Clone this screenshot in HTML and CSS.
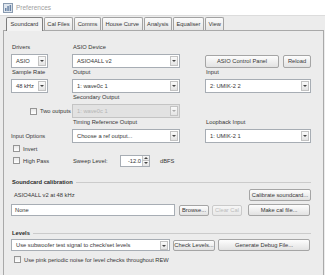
FILE: index.html
```html
<!DOCTYPE html>
<html lang="en">
<head>
    <meta charset="UTF-8">
    <title>Preferences</title>
    <link rel="stylesheet" href="styles.css">
</head>
<body>
<div class="window">
    <div class="titlebar">
        <svg class="app-icon" width="10" height="10" viewBox="0 0 10 10">
            <rect x="0.5" y="0.5" width="9" height="9" fill="#dfe6ee" stroke="#8a9bb0"/>
            <rect x="2" y="5" width="1.5" height="3" fill="#6a84a6"/>
            <rect x="4.3" y="3" width="1.5" height="5" fill="#6a84a6"/>
            <rect x="6.6" y="2" width="1.5" height="6" fill="#6a84a6"/>
        </svg>
        <span class="title">Preferences</span>
    </div>

    <div class="tabs">
        <div class="tab active">Soundcard</div>
        <div class="tab">Cal Files</div>
        <div class="tab">Comms</div>
        <div class="tab">House Curve</div>
        <div class="tab">Analysis</div>
        <div class="tab">Equaliser</div>
        <div class="tab">View</div>
    </div>

    <div class="panel">
        <div class="device-grid">
            <!-- row 1 -->
            <div class="field col-a">
                <div class="label">Drivers</div>
                <div class="combo small"><span class="value">ASIO</span><span class="arrow"></span></div>
            </div>
            <div class="field col-b">
                <div class="label">ASIO Device</div>
                <div class="combo"><span class="value">ASIO4ALL v2</span><span class="arrow"></span></div>
            </div>
            <div class="field col-c">
                <div class="label"></div>
                <div class="button-row">
                    <button class="btn asio-panel">ASIO Control Panel</button>
                    <button class="btn reload">Reload</button>
                </div>
            </div>

            <!-- row 2 -->
            <div class="field col-a">
                <div class="label">Sample Rate</div>
                <div class="combo small"><span class="value">48 kHz</span><span class="arrow"></span></div>
            </div>
            <div class="field col-b">
                <div class="label">Output</div>
                <div class="combo"><span class="value">1: wave0c 1</span><span class="arrow"></span></div>
            </div>
            <div class="field col-c">
                <div class="label">Input</div>
                <div class="combo"><span class="value">2: UMIK-2 2</span><span class="arrow"></span></div>
            </div>

            <!-- row 3 -->
            <div class="field col-ab">
                <div class="label"></div>
                <div class="check right">
                    <span class="box"></span><span>Two outputs</span>
                </div>
            </div>
            <div class="field col-b">
                <div class="label">Secondary Output</div>
                <div class="combo disabled"><span class="value">1: wave0c 1</span><span class="arrow"></span></div>
            </div>

            <!-- row 4 -->
            <div class="field col-a">
                <div class="label"></div>
                <div class="plain">Input Options</div>
            </div>
            <div class="field col-b">
                <div class="label">Timing Reference Output</div>
                <div class="combo"><span class="value">Choose a ref output...</span><span class="arrow"></span></div>
            </div>
            <div class="field col-c">
                <div class="label">Loopback Input</div>
                <div class="combo"><span class="value">1: UMIK-2 1</span><span class="arrow"></span></div>
            </div>

            <!-- row 5 -->
            <div class="check invert col-ab">
                <span class="box"></span><span>Invert</span>
            </div>

            <!-- row 6 -->
            <div class="check sweep-row col-ab">
                <span class="box"></span><span>High Pass</span>
            </div>
            <div class="sweep col-bc">
                <span class="sweep-label">Sweep Level:</span>
                <div class="spinner">
                    <span class="value">-12.0</span>
                    <span class="spin-btns"><span class="up"></span><span class="down"></span></span>
                </div>
                <span class="unit">dBFS</span>
            </div>
        </div>

        <div class="section-title calib-title">Soundcard calibration</div>
        <div class="line-row calib-info">
            <span class="info-text">ASIO4ALL v2 at 48 kHz</span>
            <button class="btn wide">Calibrate soundcard...</button>
        </div>
        <div class="line-row calib-file">
            <div class="text-field">None</div>
            <button class="btn browse">Browse...</button>
            <button class="btn clear" disabled>Clear Cal</button>
            <button class="btn wide">Make cal file...</button>
        </div>

        <div class="section-title levels-title">Levels</div>
        <div class="line-row levels-row">
            <div class="combo levels-combo"><span class="value">Use subwoofer test signal to check/set levels</span><span class="arrow"></span></div>
            <button class="btn check-levels">Check Levels...</button>
            <button class="btn debug">Generate Debug File...</button>
        </div>
        <div class="check pink">
            <span class="box"></span><span>Use pink periodic noise for level checks throughout REW</span>
        </div>
    </div>
</div>
</body>
</html>
```

FILE: styles.css
```css
body {
    margin: 0;
    background: #ececec;
    font-family: "Liberation Sans", Arial, sans-serif;
    font-size: 5.75px;
    color: #363636;
}
.window {
    width: 325px;
    height: 275px;
    overflow: hidden;
    background: #ececec;
}
/* Title bar */
.titlebar {
    height: 15px;
    background: #fff;
    border-bottom: 1px solid #dcdcdc;
    display: flex;
    align-items: center;
    padding-left: 3px;
}
.app-icon {
    margin-right: 3px;
}
.title {
    color: #a0a0a0;
    font-size: 6.5px;
}
/* Tabs */
.tabs {
    display: flex;
    margin-top: 1px;
    padding-left: 6px;
    height: 13px;
    position: relative;
    z-index: 1;
}
.tab {
    height: 13px;
    line-height: 12px;
    padding: 0 2.5px;
    margin-right: 1px;
    border: 1px solid #a2a2a2;
    border-bottom: none;
    border-radius: 2px 2px 0 0;
    background: linear-gradient(#fbfbfb, #e6e6e6);
    box-sizing: border-box;
}
.tab.active {
    border-color: #7d7d7d;
    background: #f3f3f3;
    height: 14px;
    padding: 0 3.5px;
}
/* Panel */
.panel {
    margin-left: 3px;
    width: 321px;
    height: 245px;
    box-sizing: border-box;
    border: 1px solid #a9a9a9;
    border-bottom: none;
    padding: 12px 12px 0 7px;
}
.device-grid {
    display: grid;
    grid-template-columns: 44px 17px 108px 25px 106px;
}
.col-a { grid-column: 1; }
.col-ab { grid-column: 1 / 3; }
.col-b { grid-column: 3; }
.col-c { grid-column: 5; }
.col-bc { grid-column: 3 / 6; }
.field {
    display: flex;
    flex-direction: column;
}
.label {
    height: 9px;
    line-height: 9px;
    margin-bottom: 2px;
    padding-left: 1px;
}
.plain {
    height: 14px;
    line-height: 14px;
}
/* Combo box */
.combo {
    height: 14px;
    box-sizing: border-box;
    border: 1px solid #a7adb4;
    background: #fff;
    display: flex;
    align-items: center;
}
.combo.small {
    width: 37px;
}
.combo .value {
    flex: 1;
    padding-left: 4px;
    white-space: nowrap;
    overflow: hidden;
}
.combo .arrow {
    width: 6px;
    height: 8px;
    margin-right: 1px;
    border: 1px solid #c3c3c3;
    background: linear-gradient(#fafafa, #e4e4e4);
    position: relative;
}
.combo .arrow::after {
    content: "";
    position: absolute;
    left: 1px;
    top: 3px;
    border-left: 2px solid transparent;
    border-right: 2px solid transparent;
    border-top: 2px solid #444;
}
.combo.disabled {
    background: #e2e2e2;
    border-color: #c4c4c4;
    color: #b5b5b5;
}
.combo.disabled .arrow::after {
    border-top-color: #aaa;
}
/* Buttons */
.btn {
    font-family: inherit;
    font-size: inherit;
    color: #363636;
    height: 13px;
    padding: 0;
    border: 1px solid #a5a5a5;
    border-radius: 2px;
    background: linear-gradient(#fdfdfd, #e2e2e2);
    box-sizing: border-box;
}
.btn:disabled {
    color: #bcbcbc;
    border-color: #cacaca;
    background: linear-gradient(#f6f6f6, #e8e8e8);
}
.button-row {
    display: flex;
    height: 14px;
    align-items: center;
}
.asio-panel {
    width: 74px;
}
.reload {
    width: 28px;
    margin-left: 4px;
}
/* Checkboxes */
.check {
    display: flex;
    align-items: center;
    height: 14px;
}
.check.right {
    justify-content: flex-end;
    padding-right: 1px;
}
.check .box {
    width: 7px;
    height: 7px;
    box-sizing: border-box;
    border: 1px solid #959595;
    background: linear-gradient(#e8e8e8, #fff);
    margin-right: 3px;
}
.check.invert {
    height: 11px;
    padding-left: 2px;
}
.check.sweep-row {
    height: 13px;
    padding-left: 2px;
}
/* Sweep level */
.sweep {
    display: flex;
    align-items: center;
    height: 13px;
    padding-left: 1px;
}
.sweep-label {
    width: 47px;
}
.spinner {
    width: 30px;
    height: 12px;
    box-sizing: border-box;
    border: 1px solid #a7adb4;
    background: #fff;
    display: flex;
}
.spinner .value {
    flex: 1;
    text-align: right;
    line-height: 10px;
    padding-right: 1px;
}
.spin-btns {
    width: 6px;
    display: flex;
    flex-direction: column;
    border-left: 1px solid #c3c3c3;
}
.spin-btns span {
    flex: 1;
    background: linear-gradient(#fafafa, #e4e4e4);
    position: relative;
}
.spin-btns .up {
    border-bottom: 1px solid #c3c3c3;
}
.spin-btns .up::after,
.spin-btns .down::after {
    content: "";
    position: absolute;
    left: 1px;
    top: 1px;
    border-left: 2px solid transparent;
    border-right: 2px solid transparent;
}
.spin-btns .up::after {
    border-bottom: 2px solid #444;
}
.spin-btns .down::after {
    border-top: 2px solid #444;
}
.unit {
    margin-left: 10px;
}
/* Sections */
.section-title {
    display: flex;
    align-items: center;
    height: 10px;
    width: 300px;
    font-weight: bold;
    padding-left: 1px;
    box-sizing: border-box;
    color: #2a2a2a;
}
.section-title::after {
    content: "";
    flex: 1;
    border-top: 1px solid #cbcbcb;
    margin-left: 3px;
}
.calib-title {
    margin-top: 10px;
}
.line-row {
    display: flex;
    align-items: center;
    width: 300px;
    height: 12px;
}
.calib-info {
    margin-top: 2px;
}
.info-text {
    flex: 1;
    padding-left: 3px;
}
.btn.wide {
    width: 62px;
    height: 12px;
}
.calib-file {
    margin-top: 3px;
}
.text-field {
    width: 164px;
    height: 12px;
    box-sizing: border-box;
    border: 1px solid #a7adb4;
    background: #fff;
    line-height: 10px;
    padding-left: 3px;
}
.browse {
    width: 30px;
    height: 11px;
    margin-left: 4px;
}
.clear {
    width: 30px;
    height: 11px;
    margin-left: 3px;
    margin-right: 6px;
}
.levels-title {
    margin-top: 12px;
}
.levels-row {
    margin-top: 1px;
}
.levels-combo {
    width: 159px;
    height: 12px;
}
.levels-combo .arrow {
    height: 7px;
}
.check-levels {
    width: 42px;
    height: 11px;
    margin-left: 3px;
}
.debug {
    width: 92px;
    height: 12px;
    margin-left: 3px;
}
.check.pink {
    margin-top: 3px;
    height: 11px;
    padding-left: 3px;
}
```
